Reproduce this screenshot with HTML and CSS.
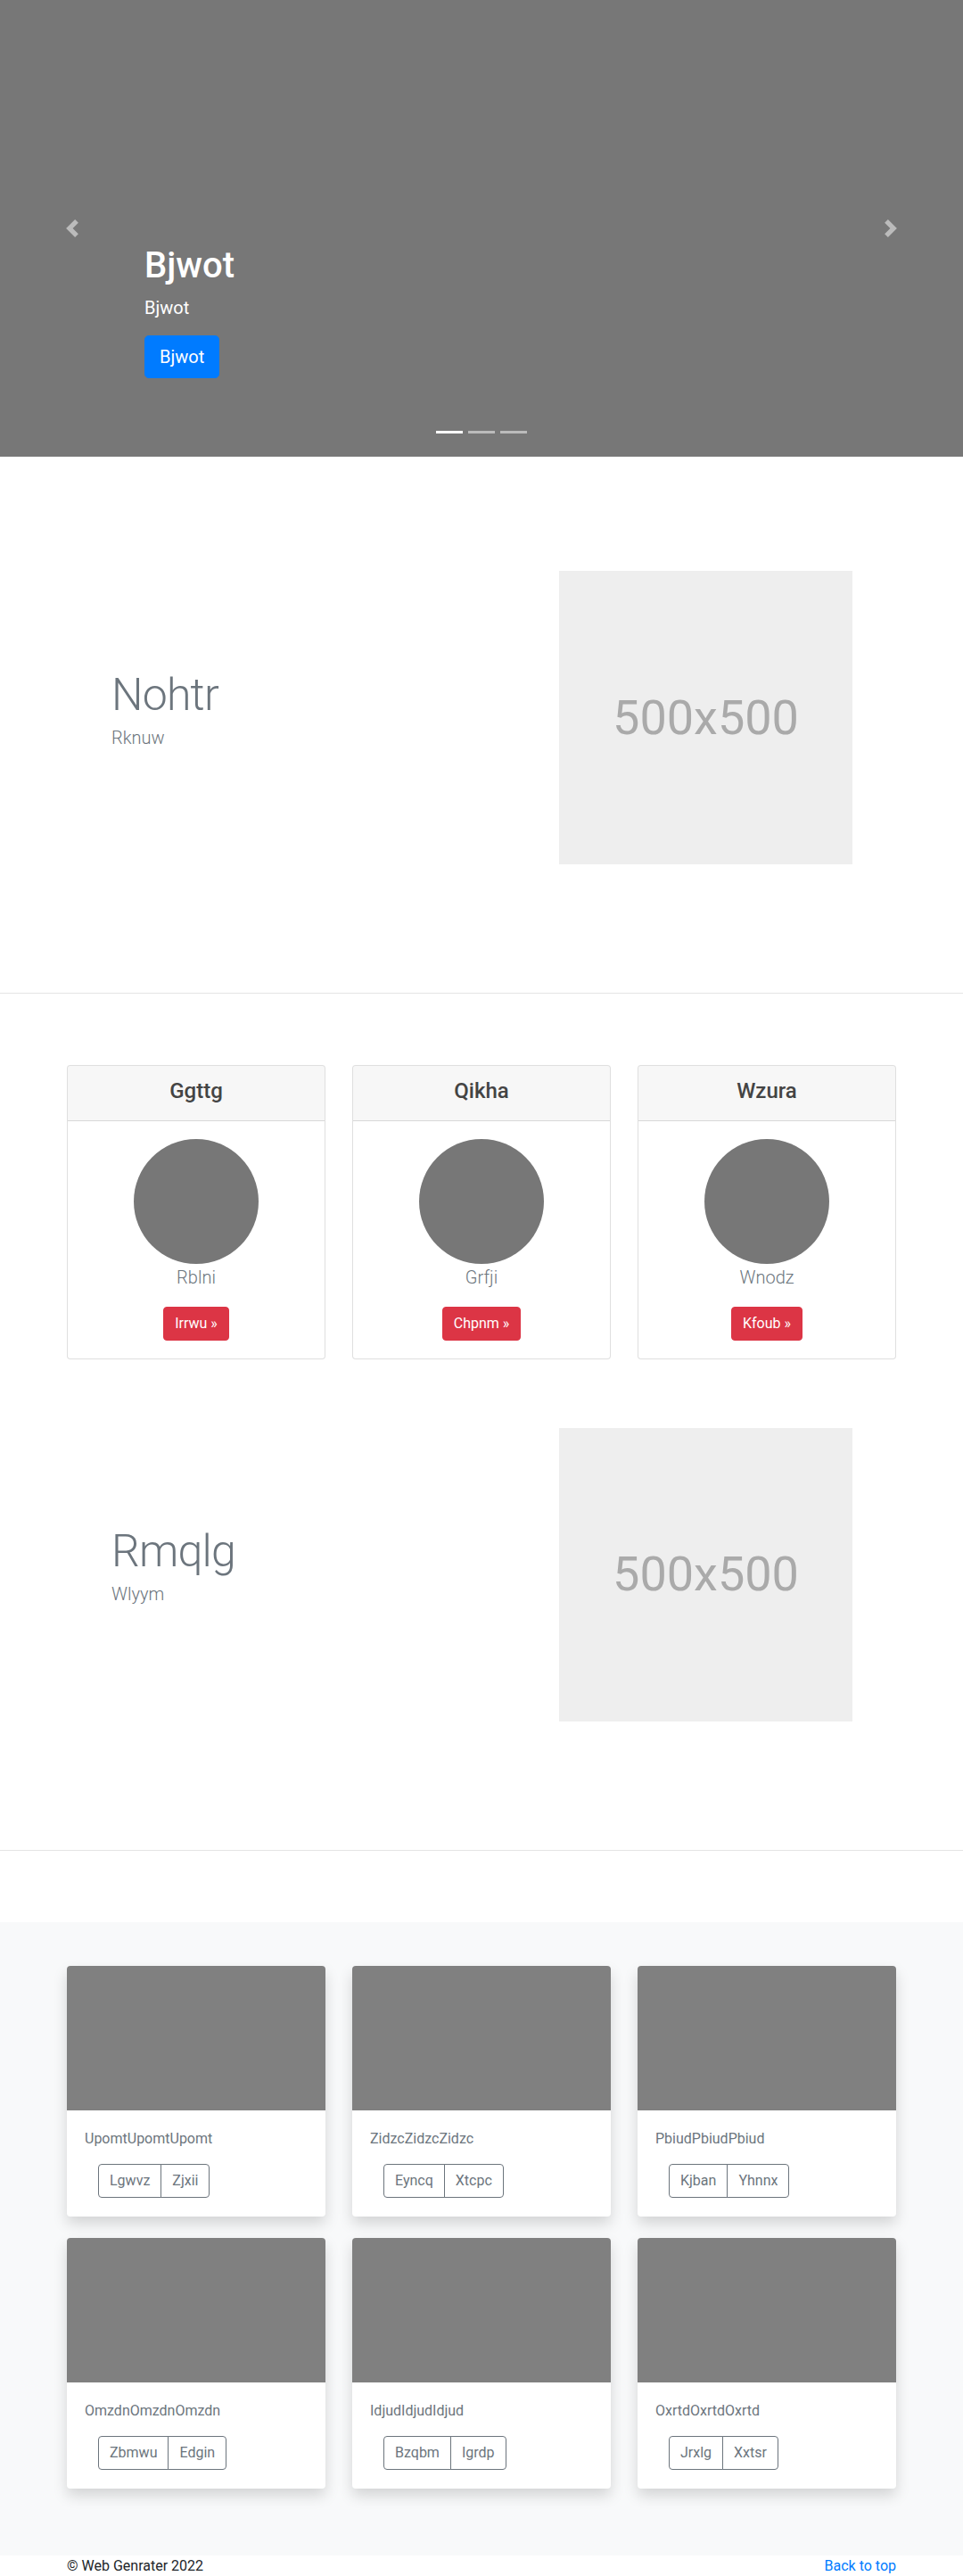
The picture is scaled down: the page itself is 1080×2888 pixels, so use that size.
FILE: index.html
```html
<!DOCTYPE html>
<html lang="en">
<head>
<meta charset="utf-8">
<title>Web Genrater</title>
<link rel="stylesheet" href="styles.css">
</head>
<body>
<header class="hero">
  <a class="hero-ctrl hero-prev" href="#">
    <svg width="20" height="20" viewBox="0 0 8 8"><path d="M5.25 0l-4 4 4 4 1.5-1.5-2.5-2.5 2.5-2.5-1.5-1.5z" fill="#fff"/></svg>
  </a>
  <a class="hero-ctrl hero-next" href="#">
    <svg width="20" height="20" viewBox="0 0 8 8"><path d="M2.75 0l-1.5 1.5 2.5 2.5-2.5 2.5 1.5 1.5 4-4-4-4z" fill="#fff"/></svg>
  </a>
  <div class="hero-caption">
    <h1 class="hero-title">Bjwot</h1>
    <p class="hero-text">Bjwot</p>
    <a class="btn-primary-lg" href="#">Bjwot</a>
  </div>
  <div class="dots">
    <span class="dot active"></span>
    <span class="dot"></span>
    <span class="dot"></span>
  </div>
</header>

<section class="featurette featurette-first">
  <div class="container feat-grid">
    <div class="feat-text">
      <h2 class="feat-heading">Nohtr</h2>
      <p class="feat-lead">Rknuw</p>
    </div>
    <div class="placeholder">500x500</div>
  </div>
</section>

<hr class="divider">

<section class="container pricing">
  <div class="pcard">
    <div class="pcard-header"><h4 class="pcard-title">Ggttg</h4></div>
    <div class="pcard-body">
      <div class="avatar"></div>
      <p class="pcard-label">Rblni</p>
      <a class="btn-danger" href="#">Irrwu &raquo;</a>
    </div>
  </div>
  <div class="pcard">
    <div class="pcard-header"><h4 class="pcard-title">Qikha</h4></div>
    <div class="pcard-body">
      <div class="avatar"></div>
      <p class="pcard-label">Grfji</p>
      <a class="btn-danger" href="#">Chpnm &raquo;</a>
    </div>
  </div>
  <div class="pcard">
    <div class="pcard-header"><h4 class="pcard-title">Wzura</h4></div>
    <div class="pcard-body">
      <div class="avatar"></div>
      <p class="pcard-label">Wnodz</p>
      <a class="btn-danger" href="#">Kfoub &raquo;</a>
    </div>
  </div>
</section>

<section class="featurette featurette-second">
  <div class="container feat-grid">
    <div class="feat-text">
      <h2 class="feat-heading">Rmqlg</h2>
      <p class="feat-lead">Wlyym</p>
    </div>
    <div class="placeholder">500x500</div>
  </div>
</section>

<hr class="divider">

<section class="album">
  <div class="container album-grid">
    <div class="acard">
      <div class="acard-img"></div>
      <div class="acard-body">
        <p class="acard-text">UpomtUpomtUpomt</p>
        <div class="btn-group"><a class="btn-outline" href="#">Lgwvz</a><a class="btn-outline" href="#">Zjxii</a></div>
      </div>
    </div>
    <div class="acard">
      <div class="acard-img"></div>
      <div class="acard-body">
        <p class="acard-text">ZidzcZidzcZidzc</p>
        <div class="btn-group"><a class="btn-outline" href="#">Eyncq</a><a class="btn-outline" href="#">Xtcpc</a></div>
      </div>
    </div>
    <div class="acard">
      <div class="acard-img"></div>
      <div class="acard-body">
        <p class="acard-text">PbiudPbiudPbiud</p>
        <div class="btn-group"><a class="btn-outline" href="#">Kjban</a><a class="btn-outline" href="#">Yhnnx</a></div>
      </div>
    </div>
    <div class="acard">
      <div class="acard-img"></div>
      <div class="acard-body">
        <p class="acard-text">OmzdnOmzdnOmzdn</p>
        <div class="btn-group"><a class="btn-outline" href="#">Zbmwu</a><a class="btn-outline" href="#">Edgin</a></div>
      </div>
    </div>
    <div class="acard">
      <div class="acard-img"></div>
      <div class="acard-body">
        <p class="acard-text">IdjudIdjudIdjud</p>
        <div class="btn-group"><a class="btn-outline" href="#">Bzqbm</a><a class="btn-outline" href="#">Igrdp</a></div>
      </div>
    </div>
    <div class="acard">
      <div class="acard-img"></div>
      <div class="acard-body">
        <p class="acard-text">OxrtdOxrtdOxrtd</p>
        <div class="btn-group"><a class="btn-outline" href="#">Jrxlg</a><a class="btn-outline" href="#">Xxtsr</a></div>
      </div>
    </div>
  </div>
</section>

<footer class="container footer">
  <p class="footer-copy">&copy; Web Genrater 2022</p>
  <a class="footer-top" href="#">Back to top</a>
</footer>
</body>
</html>
```

FILE: styles.css
```css
* { box-sizing: border-box; }

html, body {
  margin: 0;
  padding: 0;
}

body {
  font-family: "Segoe UI", Roboto, "Noto Sans", "Liberation Sans", sans-serif;
  font-size: 16px;
  line-height: 1.5;
  color: #212529;
  background: #fff;
}

a { text-decoration: none; }

.container {
  width: 930px;
  margin: 0 auto;
}

/* ---------- Hero carousel ---------- */
.hero {
  position: relative;
  height: 512px;
  background: #777;
  overflow: hidden;
}

.hero-ctrl {
  position: absolute;
  top: 0;
  bottom: 0;
  width: 15%;
  display: flex;
  align-items: center;
  justify-content: center;
  opacity: .5;
}
.hero-prev { left: 0; }
.hero-next { right: 0; }

.hero-caption {
  position: absolute;
  left: 15%;
  right: 15%;
  top: 274px;
  color: #fff;
}

.hero-title {
  margin: 0 0 8px;
  font-size: 40px;
  font-weight: 500;
  line-height: 1.2;
}

.hero-text {
  margin: 0 0 16px;
  font-size: 20px;
  line-height: 30px;
}

.btn-primary-lg {
  display: inline-block;
  padding: 8px 16px;
  font-size: 20px;
  line-height: 30px;
  color: #fff;
  background: #007bff;
  border: 1px solid #007bff;
  border-radius: 4.8px;
}

.dots {
  position: absolute;
  left: 0;
  right: 0;
  bottom: 26px;
  display: flex;
  justify-content: center;
  gap: 6px;
}
.dot {
  width: 30px;
  height: 3px;
  background: rgba(255, 255, 255, .5);
}
.dot.active { background: #fff; }

/* ---------- Featurettes ---------- */
.featurette-first { padding: 128px 0 0; }
.featurette-second { padding: 77px 0 0; }

.feat-grid {
  display: grid;
  grid-template-columns: 1fr 329px;
  align-items: center;
  padding: 0 49px 0 50px;
}

.feat-text {
  margin-bottom: 14px;
}

.feat-heading {
  margin: 0 0 8px;
  font-size: 50px;
  font-weight: 300;
  line-height: 1;
  letter-spacing: -0.8px;
  color: #6c757d;
}

.feat-lead {
  margin: 0;
  font-size: 20px;
  font-weight: 300;
  line-height: 30px;
  color: #6c757d;
}

.placeholder {
  width: 329px;
  height: 329px;
  background: #eee;
  color: #aaa;
  font-size: 54px;
  line-height: 1;
  display: flex;
  align-items: center;
  justify-content: center;
}

.divider {
  margin: 144px 0 80px;
  border: 0;
  border-top: 1px solid rgba(0, 0, 0, .1);
  height: 0;
}

/* ---------- Pricing style cards ---------- */
.pricing {
  display: grid;
  grid-template-columns: repeat(3, 1fr);
  gap: 30px;
}

.pcard {
  border: 1px solid rgba(0, 0, 0, .125);
  border-radius: 4px;
  overflow: hidden;
  background: #fff;
}

.pcard-header {
  padding: 14px 20px 12px;
  background: rgba(0, 0, 0, .03);
  border-bottom: 1px solid rgba(0, 0, 0, .125);
  text-align: center;
}

.pcard-title {
  margin: 0 0 6px;
  font-size: 24px;
  font-weight: 500;
  line-height: 1.2;
  color: #444;
}

.pcard-body {
  padding: 20px;
  text-align: center;
}

.avatar {
  width: 140px;
  height: 140px;
  border-radius: 50%;
  background: #777;
  margin: 0 auto;
}

.pcard-label {
  margin: 0 0 18px;
  font-size: 20px;
  font-weight: 300;
  line-height: 30px;
  color: #6c757d;
}

.btn-danger {
  display: inline-block;
  padding: 6px 12px;
  font-size: 16px;
  line-height: 24px;
  color: #fff;
  background: #dc3545;
  border: 1px solid #dc3545;
  border-radius: 4px;
}

/* ---------- Album ---------- */
.album {
  background: #f8f9fa;
  padding: 49px 0 75px;
}

.album-grid {
  display: grid;
  grid-template-columns: repeat(3, 1fr);
  column-gap: 30px;
  row-gap: 24px;
}

.acard {
  background: #fff;
  border-radius: 4px;
  overflow: hidden;
  box-shadow: 0 8px 16px rgba(0, 0, 0, .15);
}

.acard-img {
  height: 162px;
  background: #808080;
}

.acard-body {
  padding: 20px 20px 21px;
}

.acard-text {
  margin: 0 0 16px;
  font-size: 16px;
  line-height: 24px;
  color: #6c757d;
}

.btn-group {
  display: inline-flex;
  margin-left: 15px;
}

.btn-outline {
  display: inline-block;
  padding: 6px 12px;
  font-size: 16px;
  line-height: 24px;
  color: #6c757d;
  border: 1px solid #6c757d;
}
.btn-outline:first-child { border-radius: 4px 0 0 4px; }
.btn-outline:last-child { border-radius: 0 4px 4px 0; margin-left: -1px; }

/* ---------- Footer ---------- */
.footer {
  display: flex;
  justify-content: space-between;
  align-items: flex-start;
}

.footer-copy {
  margin: 0 0 16px;
}

.footer-top {
  color: #007bff;
}
```
